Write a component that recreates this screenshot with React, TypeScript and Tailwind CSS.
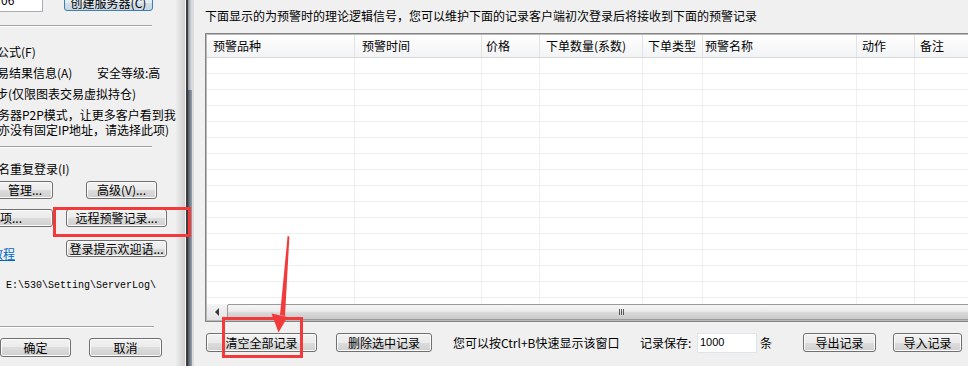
import React from "react";

const BTN =
  "flex shrink-0 items-center rounded-[3px] border border-[#707070] bg-[linear-gradient(#f2f2f2_0%,#ebebeb_50%,#dddddd_50%,#cfcfcf_100%)] shadow-[inset_0_0_0_1px_#fbfbfb] leading-none whitespace-nowrap text-black";

function Btn({ className = "", children }: { className?: string; children: React.ReactNode }) {
  return <div className={`${BTN} ${className}`}>{children}</div>;
}

const cols: { label: string; cls: string }[] = [
  { label: "预警品种", cls: "w-[148px] pl-[6px]" },
  { label: "预警时间", cls: "w-[127px] pl-[7px]" },
  { label: "价格", cls: "w-[58px] pl-[4px]" },
  { label: "下单数量(系数)", cls: "w-[103px] pl-[6px]" },
  { label: "下单类型", cls: "w-[60px] pl-[5px]" },
  { label: "预警名称", cls: "w-[154px] pl-[2px]" },
  { label: "动作", cls: "w-[58px] pl-[5px]" },
  { label: "备注", cls: "w-[56px] pl-[5px]" },
];

const rowCls = [
  "w-[148px]",
  "w-[127px]",
  "w-[58px]",
  "w-[103px]",
  "w-[60px]",
  "w-[154px]",
  "w-[58px]",
  "w-[56px]",
];

export default function App() {
  const rows = Array.from({ length: 16 }, (_, i) => i);
  return (
    <div className="relative flex h-[366px] w-[968px] overflow-hidden bg-[#f0f0f0] font-['Noto_Sans_CJK_SC','Noto_Sans',sans-serif] text-[12px] text-black">
      {/* LEFT PANEL */}
      <div className="flex w-[176px] shrink-0 flex-col overflow-hidden">
        <div className="flex h-[12px] shrink-0 items-end">
          <div className="-ml-[2px] flex h-[24px] w-[45px] shrink-0 items-center border border-[#abadb3] bg-white pl-[2px] leading-none">
            06
          </div>
          <div className="mb-[1px] ml-[21px] flex h-[16px] w-[89px] shrink-0 items-center justify-center rounded-[3px] border border-[#3c7fb1] bg-[linear-gradient(#eef4f9_0%,#e3ebf2_50%,#d3dfea_50%,#c7d6e3_100%)] leading-none whitespace-nowrap">
            创建服务器(C)
          </div>
        </div>
        <div className="mt-[13px] h-[2px] w-[152px] shrink-0 border-y border-t-[#a0a0a0] border-b-white" />
        <div className="-ml-[3px] mt-[14px] h-[21px] shrink-0 whitespace-nowrap leading-[21px]">公式(F)</div>
        <div className="flex h-[21px] shrink-0 whitespace-nowrap leading-[21px]">
          <span className="-ml-[3px] w-[100px] shrink-0">易结果信息(A)</span>
          <span>安全等级:高</span>
        </div>
        <div className="-ml-[4px] h-[21px] shrink-0 whitespace-nowrap leading-[21px]">步(仅限图表交易虚拟持仓)</div>
        <div className="-ml-[2px] mt-[3px] shrink-0 whitespace-nowrap leading-[15px]">
          <div>务器P2P模式，让更多客户看到我</div>
          <div>亦没有固定IP地址，请选择此项)</div>
        </div>
        <div className="mt-[9px] h-[2px] w-[152px] shrink-0 border-y border-t-[#a0a0a0] border-b-white" />
        <div className="-ml-[2px] mt-[13px] h-[16px] shrink-0 whitespace-nowrap leading-[16px]">名重复登录(I)</div>
        <div className="mt-[4px] flex h-[18px] shrink-0">
          <Btn className="-ml-[20px] h-[18px] w-[73px] justify-end pr-[10px]">管理...</Btn>
          <Btn className="ml-[33px] h-[18px] w-[71px] justify-center">高级(V)...</Btn>
        </div>
        <div className="mt-[10px] flex h-[18px] shrink-0">
          <Btn className="-ml-[20px] h-[18px] w-[73px] justify-end pr-[30px]">项...</Btn>
          <Btn className="ml-[13px] h-[18px] w-[101px] justify-center">远程预警记录...</Btn>
        </div>
        <div className="mt-[13px] flex h-[22px] shrink-0 items-start">
          <div className="w-[66px] shrink-0 overflow-hidden">
            <span className="-ml-[9px] mt-[7px] block whitespace-nowrap leading-[14px] text-[#0066cc] underline">教程</span>
          </div>
          <Btn className="h-[17px] w-[101px] justify-center">登录提示欢迎语...</Btn>
        </div>
        <div className="mt-[17px] h-[14px] shrink-0 whitespace-nowrap pl-[6px] font-['Liberation_Mono',monospace] text-[10px] leading-[14px]">
          {"E:\\530\\Setting\\ServerLog\\"}
        </div>
        <div className="mt-[33px] h-[2px] w-[154px] shrink-0 border-y border-t-[#a0a0a0] border-b-white" />
        <div className="mt-[10px] flex h-[19px] shrink-0">
          <Btn className="h-[19px] w-[71px] justify-center">确定</Btn>
          <Btn className="ml-[18px] h-[19px] w-[73px] justify-center">取消</Btn>
        </div>
      </div>

      {/* WINDOW FRAME DIVIDER */}
      <div className="flex w-[18px] shrink-0">
        <div className="w-[9px] bg-[linear-gradient(to_right,#ededed,#cfcfcf)]" />
        <div className="w-[1px] bg-[#f7f7f7]" />
        <div className="w-[2px] bg-[#3c3c3c]" />
        <div className="flex w-[4px] flex-col">
          <div className="h-[90px] bg-[linear-gradient(to_right,#8e979f,#dfe3e7)]" />
          <div className="flex-1 bg-[linear-gradient(to_right,#4a5763,#98a3ac)]" />
        </div>
        <div className="w-[2px] bg-[#dcdcdc]" />
      </div>

      {/* RIGHT PANEL */}
      <div className="flex flex-1 flex-col overflow-hidden pl-[11px]">
        <div className="mt-[8px] h-[16px] shrink-0 whitespace-nowrap leading-[16px]">
          下面显示的为预警时的理论逻辑信号，您可以维护下面的记录客户端初次登录后将接收到下面的预警记录
        </div>
        <div className="mt-[9px] w-[772px] shrink-0 border border-[#858585]">
          <div className="flex flex-col border border-[#b9b9b9] bg-white">
            {/* header */}
            <div className="flex h-[23px] shrink-0 border-b border-[#d9d9d9] bg-[linear-gradient(#ffffff,#f2f3f5)]">
              {cols.map((c) => (
                <div
                  key={c.label}
                  className={`flex h-full shrink-0 items-center whitespace-nowrap border-r border-[#e3e3e3] leading-none ${c.cls}`}
                >
                  {c.label}
                </div>
              ))}
            </div>
            {/* rows */}
            <div className="flex h-[246px] shrink-0 flex-col overflow-hidden">
              {rows.map((r) => (
                <div key={r} className="flex h-[16px] shrink-0 border-b border-[#efefef]">
                  {rowCls.map((w, i) => (
                    <div key={i} className={`h-full shrink-0 border-r border-[#efefef] ${w}`} />
                  ))}
                </div>
              ))}
            </div>
            {/* horizontal scrollbar */}
            <div className="flex h-[16px] shrink-0 bg-[#e9e9e9]">
              <div className="flex w-[20px] shrink-0 items-center justify-center bg-[linear-gradient(#f4f4f4,#e4e4e4)]">
                <div className="h-0 w-0 border-y-[4px] border-r-[4px] border-y-transparent border-r-[#3a3a3a]" />
              </div>
              <div className="flex flex-1 items-center rounded-[2px] border border-[#9a9a9a] bg-[linear-gradient(#f6f6f6_0%,#ebebeb_45%,#d9d9d9_55%,#c9c9c9_100%)]">
                <div className="ml-[391px] flex gap-[1px]">
                  <div className="h-[6px] w-[1px] bg-[#5a5a5a]" />
                  <div className="h-[6px] w-[1px] bg-[#5a5a5a]" />
                  <div className="h-[6px] w-[1px] bg-[#5a5a5a]" />
                </div>
              </div>
            </div>
          </div>
        </div>
        {/* bottom bar */}
        <div className="mt-[11px] flex h-[20px] shrink-0 items-start whitespace-nowrap">
          <Btn className="ml-[1px] h-[19px] w-[111px] justify-center">清空全部记录</Btn>
          <Btn className="ml-[19px] h-[19px] w-[96px] justify-center">删除选中记录</Btn>
          <span className="ml-[21px] w-[187px] shrink-0 leading-[19px]">您可以按Ctrl+B快速显示该窗口</span>
          <span className="w-[57px] shrink-0 leading-[19px]">记录保存:</span>
          <div className="h-[20px] w-[60px] shrink-0 border border-[#dfe5eb] bg-white pl-[2px] font-['Liberation_Sans',sans-serif] text-[11px] leading-[17px]">
            1000
          </div>
          <span className="ml-[3px] shrink-0 leading-[19px]">条</span>
          <Btn className="ml-[31px] h-[19px] w-[73px] justify-center">导出记录</Btn>
          <Btn className="ml-[17px] h-[19px] w-[69px] justify-center">导入记录</Btn>
        </div>
      </div>

      {/* red annotation overlay */}
      <svg
        className="pointer-events-none absolute left-0 top-0"
        width="968"
        height="366"
        viewBox="0 0 968 366"
      >
        <rect x="54.5" y="208.5" width="135" height="27" fill="none" stroke="#f23a3a" strokeWidth="3" />
        <rect x="223.5" y="318.5" width="78" height="38" fill="none" stroke="#f23a3a" strokeWidth="3" />
        <polygon points="287.6,236 289.4,236.6 285,316 280,315" fill="#f23a3a" />
        <polygon points="271.5,313.5 287.5,317 278.5,332.5" fill="#f23a3a" />
      </svg>
    </div>
  );
}
